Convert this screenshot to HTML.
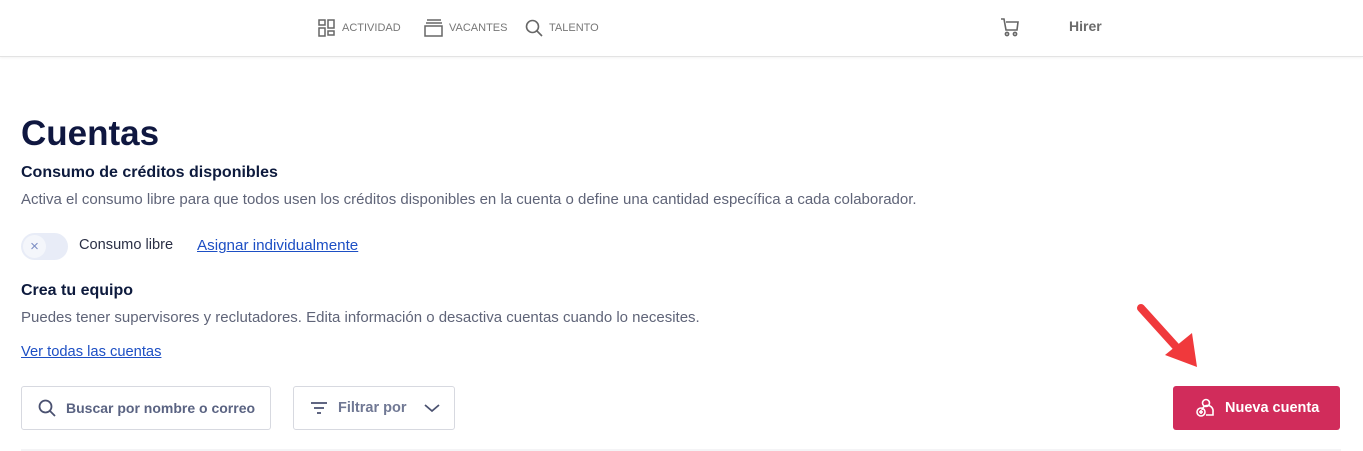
<!DOCTYPE html>
<html><head><meta charset="utf-8"><style>
*{margin:0;padding:0;box-sizing:border-box}
body{width:1363px;height:451px;background:#fff;font-family:"Liberation Sans",sans-serif;position:relative;overflow:hidden;color:#0d1a3d}
.hdr{position:absolute;left:0;top:0;width:1363px;height:57px;border-bottom:1px solid #e3e3e3;box-shadow:0 1px 2px rgba(0,0,0,.05)}
.nav{position:absolute;top:19px;font-size:11px;color:#777;display:flex;align-items:center;gap:6px}
.abs{position:absolute;white-space:nowrap}
.btn{position:absolute;border:1px solid #d7d9e0;border-radius:3px;height:44px;top:386px;display:flex;align-items:center;font-size:14.5px;font-weight:bold;color:#5a6382}
</style></head><body>
<div class="hdr"></div>
<div class="nav" style="left:318px"><svg width="18" height="18" viewBox="0 0 18 18" fill="none" stroke="#666" stroke-width="1.5"><rect x="1" y="1" width="6" height="5"/><rect x="10" y="1" width="6" height="8"/><rect x="1" y="9" width="6" height="8"/><rect x="10" y="12" width="6" height="4"/></svg>ACTIVIDAD</div>
<div class="nav" style="left:424px"><svg width="19" height="18" viewBox="0 0 19 18" fill="none" stroke="#666" stroke-width="1.5"><path d="M3 1h14M2 4h16"/><rect x="1" y="7" width="17" height="10"/></svg>VACANTES</div>
<div class="nav" style="left:525px"><svg width="18" height="18" viewBox="0 0 18 18" fill="none" stroke="#666" stroke-width="1.6"><circle cx="7.5" cy="7.5" r="6"/><path d="M12 12l5 5"/></svg>TALENTO</div>
<svg class="abs" style="left:1000px;top:17px" width="20" height="20" viewBox="0 0 20 20" fill="none" stroke="#666" stroke-width="1.6"><path d="M1 2h3l2 11h11l1-8H6"/><circle cx="7" cy="17" r="1.6"/><circle cx="15" cy="17" r="1.6"/></svg>
<div class="abs" style="left:1069px;top:18px;font-size:14px;font-weight:bold;color:#6b6b6b">Hirer</div>
<div class="abs" style="left:21px;top:114px;font-size:35px;font-weight:bold;color:#0f1740">Cuentas</div>
<div class="abs" style="left:21px;top:164px;font-size:16px;font-weight:bold">Consumo de créditos disponibles</div>
<div class="abs" style="left:21px;top:191px;font-size:15px;color:#5f6478">Activa el consumo libre para que todos usen los créditos disponibles en la cuenta o define una cantidad específica a cada colaborador.</div>
<div class="abs" style="left:21px;top:233px;width:47px;height:27px;border-radius:14px;background:#e8ecf7"><div style="position:absolute;left:2px;top:2px;width:23px;height:23px;border-radius:50%;background:#f4f6fb;color:#7d8ec4;font-size:15px;text-align:center;line-height:23px">×</div></div>
<div class="abs" style="left:79px;top:237px;font-size:14.6px;color:#2a2f45">Consumo libre</div>
<div class="abs" style="left:197px;top:237px;font-size:15.2px;color:#1d4fc4;text-decoration:underline">Asignar individualmente</div>
<div class="abs" style="left:21px;top:282px;font-size:16px;font-weight:bold">Crea tu equipo</div>
<div class="abs" style="left:21px;top:309px;font-size:15px;color:#5f6478">Puedes tener supervisores y reclutadores. Edita información o desactiva cuentas cuando lo necesites.</div>
<div class="abs" style="left:21px;top:344px;font-size:14.7px;color:#1d4fc4;text-decoration:underline">Ver todas las cuentas</div>
<div class="btn" style="left:21px;width:250px;padding-left:15px;font-size:14px"><svg width="20" height="20" viewBox="0 0 20 20" fill="none" stroke="#4a5170" stroke-width="1.8" style="margin-right:9px"><circle cx="8.5" cy="8.5" r="6"/><path d="M13 13l5 5"/></svg>Buscar por nombre o correo</div>
<div class="btn" style="left:293px;width:162px;padding-left:16px;color:#707894"><svg width="18" height="14" viewBox="0 0 18 14" stroke="#4a5170" stroke-width="1.8" style="margin-right:10px"><path d="M1 2h16M4 7h10M7 12h4"/></svg>Filtrar por<svg width="16" height="10" viewBox="0 0 16 10" fill="none" stroke="#4a5170" stroke-width="1.8" style="margin-left:18px"><path d="M1 2l7 6 7-6"/></svg></div>
<div class="abs" style="left:1173px;top:386px;width:167px;height:44px;background:#d12c5b;border-radius:3px;display:flex;align-items:center;color:#fff;font-weight:bold;font-size:14.5px;padding-left:22px"><svg width="20" height="20" viewBox="0 0 20 20" fill="none" stroke="#fff" stroke-width="1.6" style="margin-right:10px"><circle cx="11" cy="5" r="3.5"/><path d="M7 12a5 5 0 0 1 11 2v3H11"/><circle cx="6" cy="14" r="4"/><path d="M6 12v4M4 14h4"/></svg>Nueva cuenta</div>
<svg class="abs" style="left:1135px;top:300px" width="65" height="70" viewBox="0 0 65 70"><path d="M6 8L44 50" stroke="#f0393c" stroke-width="8" stroke-linecap="round"/><path d="M30 55L62 67 57 33Z" fill="#f0393c"/></svg>
<div class="abs" style="left:21px;top:449px;width:1320px;height:2px;background:#f4f4f6"></div>
</body></html>
